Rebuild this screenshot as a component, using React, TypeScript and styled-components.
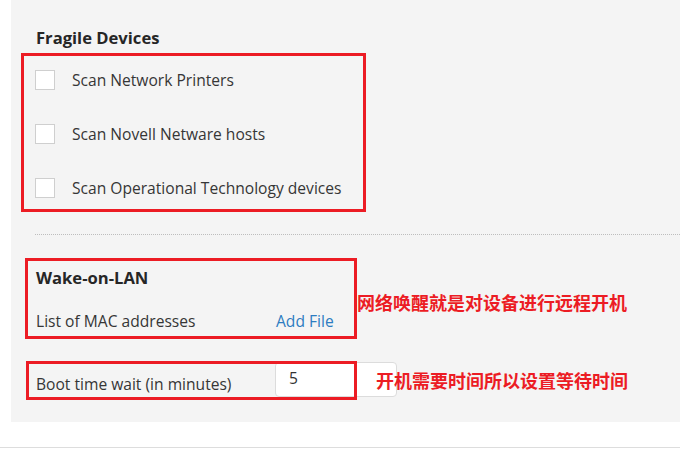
import styled, { createGlobalStyle } from 'styled-components';

const GlobalStyle = createGlobalStyle`
  html, body {
    margin: 0;
    padding: 0;
    background: #ffffff;
  }
  body {
    font-family: 'Open Sans', 'Noto Sans', sans-serif;
    color: #333333;
  }
`;

const fragileItems = [
  'Scan Network Printers',
  'Scan Novell Netware hosts',
  'Scan Operational Technology devices',
];

const App = () => {
  return (
    <Page>
      <GlobalStyle />
      <Panel>
        <SectionTitle>Fragile Devices</SectionTitle>
        <CheckList>
          {fragileItems.map((label) => (
            <CheckRow key={label}>
              <CheckBox />
              <CheckLabel>{label}</CheckLabel>
            </CheckRow>
          ))}
        </CheckList>
        <Divider />
        <WakeTitle>Wake-on-LAN</WakeTitle>
        <FieldRow>
          <FieldLabel>List of MAC addresses</FieldLabel>
          <LinkText>Add File</LinkText>
        </FieldRow>
        <InputRow>
          <FieldLabel>Boot time wait (in minutes)</FieldLabel>
          <NumberInput defaultValue="5" />
        </InputRow>

        <Highlight $left={10} $top={53} $width={345} $height={159} />
        <Highlight $left={14} $top={258} $width={332} $height={81} />
        <Highlight $left={15} $top={361} $width={331} $height={39} />
        <Note $left={346} $top={293}>网络唤醒就是对设备进行远程开机</Note>
        <Note $left={365} $top={371}>开机需要时间所以设置等待时间</Note>
      </Panel>
      <BottomRule />
    </Page>
  );
};

export default App;

const Page = styled.div`
  width: 680px;
  height: 456px;
  background: #ffffff;
  overflow: hidden;
`;

const Panel = styled.div`
  position: relative;
  margin-left: 11px;
  height: 422px;
  box-sizing: border-box;
  padding: 26px 0 0 24px;
  background: #f4f4f4;
`;

const SectionTitle = styled.div`
  font-size: 16.6px;
  line-height: 24px;
  font-weight: 700;
  color: #262626;
  padding-left: 1px;
`;

const CheckList = styled.div`
  display: flex;
  flex-direction: column;
  margin-top: 3px;
`;

const CheckRow = styled.div`
  display: flex;
  align-items: center;
  height: 54px;
`;

const CheckBox = styled.div`
  width: 18px;
  height: 18px;
  background: #ffffff;
  border: 1px solid #cfcfcf;
  flex-shrink: 0;
`;

const CheckLabel = styled.span`
  margin-left: 17px;
  font-size: 15.6px;
  line-height: 22px;
  color: #363636;
`;

const Divider = styled.div`
  margin-top: 19px;
  border-top: 1px dotted #bdbdbd;
`;

const WakeTitle = styled(SectionTitle)`
  margin-top: 31px;
`;

const FieldRow = styled.div`
  display: grid;
  grid-template-columns: 240px auto;
  align-items: end;
  margin-top: 20px;
`;

const FieldLabel = styled.span`
  font-size: 15.6px;
  line-height: 22px;
  color: #363636;
  padding-left: 1px;
`;

const LinkText = styled.span`
  font-size: 15.6px;
  line-height: 22px;
  color: #2d7cc1;
  padding-left: 1px;
`;

const InputRow = styled.div`
  display: grid;
  grid-template-columns: 240px auto;
  align-items: end;
  margin-top: 30px;

  & > span {
    margin-bottom: 2px;
  }
`;

const NumberInput = styled.input`
  width: 122px;
  height: 35px;
  box-sizing: border-box;
  padding: 0 0 3px 13px;
  border: 1px solid #dcdcdc;
  border-radius: 4px;
  background: #ffffff;
  font-family: 'Open Sans', sans-serif;
  font-size: 15.6px;
  color: #333333;
  outline: none;
`;

const Highlight = styled.div<{ $left: number; $top: number; $width: number; $height: number }>`
  position: absolute;
  left: ${(p) => p.$left}px;
  top: ${(p) => p.$top}px;
  width: ${(p) => p.$width}px;
  height: ${(p) => p.$height}px;
  box-sizing: border-box;
  border: 3px solid #ec1c24;
  pointer-events: none;
`;

const Note = styled.div<{ $left: number; $top: number }>`
  position: absolute;
  left: ${(p) => p.$left}px;
  top: ${(p) => p.$top}px;
  font-family: 'Noto Sans CJK SC', sans-serif;
  font-size: 18px;
  line-height: 18px;
  font-weight: 700;
  color: #ec1c24;
  white-space: nowrap;
`;

const BottomRule = styled.div`
  margin-top: 25px;
  border-top: 1px solid #dddddd;
`;
